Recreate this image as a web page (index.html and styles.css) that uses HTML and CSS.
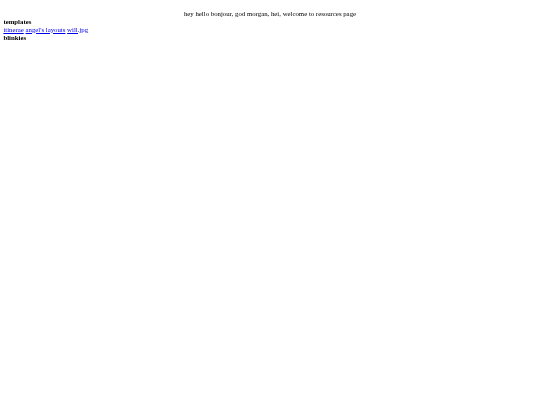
FILE: index.html
```html
<!DOCTYPE html>
<html>
<head>
<meta charset="utf-8">
<link rel="stylesheet" href="styles.css">
</head>
<body>
<div class="page">
  <p class="greeting">hey hello bonjour, god morgan, hei, welcome to resources page</p>
  <div class="section-title">templates</div>
  <div class="links"><a href="#">itinerae</a> <a href="#">angel's layouts</a> <a href="#">will.jpg</a></div>
  <div class="section-title">blinkies</div>
</div>
</body>
</html>
```
FILE: styles.css
```css
html, body {
  margin: 0;
  padding: 0;
  background: #ffffff;
}
.page {
  padding: 3.4px;
  font-family: "Liberation Serif", "Times New Roman", serif;
  font-size: 6.8px;
  line-height: 7.8px;
  color: #000;
  transform: translateZ(0);
  -webkit-font-smoothing: antialiased;
}
.greeting {
  text-align: center;
  margin: 6.8px 0 0 0;
}
.section-title {
  font-weight: bold;
}
.links a {
  color: #0000ee;
  text-decoration: underline;
}
```
